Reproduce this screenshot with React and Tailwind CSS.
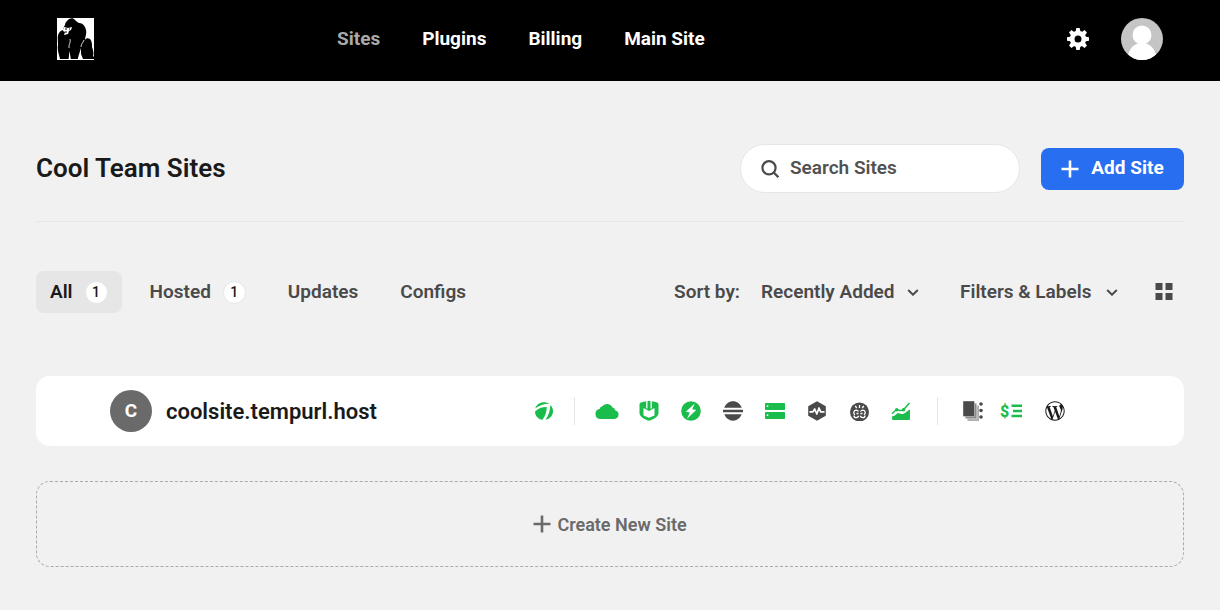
import React from 'react';
import { FaWordpressSimple } from 'react-icons/fa';

const NAV_LINKS = ['Sites', 'Plugins', 'Billing', 'Main Site'];

const TABS = [
  { label: 'All', count: 1 },
  { label: 'Hosted', count: 1 },
  { label: 'Updates' },
  { label: 'Configs' },
];

function GorillaLogo() {
  return (
    <svg width="37" height="42" viewBox="0 0 37 42" aria-hidden="true">
      <path d="M0 0h37v42H0z" fill="#fff" />
      <path
        d="M8 7C8 5 9 4 10 3c2-3 6-4 8-1 1 1 2 2 4 3 4 0 6 3 7 7 1 4-1 7-1 10 1-2 3-2 5-1 2 2 2 5 2 8 1 3 2 6 1 9l1 1v2H3c-1-5-3-9-2-14 0-5-1-9 1-12 1-2 3-3 5-3-1-2 0-3 1-5z"
        fill="#000"
      />
      <path d="M7 9l4 1 4-1-1 3-2 1-1 3-4 1 1-3-2-1z" fill="#fff" />
      <path d="M8 11h2M12 11h1M8 14h2" stroke="#000" strokeWidth="1" />
      <path d="M13 21c1 3-1 5-1 7v2M27 22c-1 3-3 4-3 7" fill="none" stroke="#fff" strokeWidth=".8" />
      <path d="M11.500 42l1-9 1.500 9zM20.500 42l1-4 2.500-8v6l2 5z" fill="#fff" />
    </svg>
  );
}

function GearIcon() {
  return (
    <svg width="22" height="22" viewBox="0 0 22 22" fill="#fff" aria-hidden="true">
      <path
        fillRule="evenodd"
        d="M11 2.800a8.200 8.200 0 1 0 0 16.400a8.200 8.200 0 1 0 0-16.400zM11 7.500a3.500 3.500 0 1 1 0 7a3.500 3.500 0 1 1 0-7z"
      />
      {[0, 45, 90, 135, 180, 225, 270, 315].map((angle) => (
        <path key={angle} d="M9.300 0h3.400l.8 4.500H8.500z" transform={`rotate(${angle} 11 11)`} />
      ))}
    </svg>
  );
}

function UserAvatar() {
  return (
    <svg width="42" height="42" viewBox="0 0 42 42" className="rounded-full" aria-hidden="true">
      <path d="M0 0h42v42H0z" fill="#c5c5c5" />
      <path d="M6 42c1-10 6-17 15-17s14 7 15 17z" fill="#fff" />
      <circle cx="21" cy="17" r="9.500" fill="#fff" />
    </svg>
  );
}

function PlusIcon() {
  return (
    <svg width="18" height="18" viewBox="0 0 18 18" fill="none" stroke="currentColor" strokeWidth="2.600" aria-hidden="true">
      <path d="M9 .5v17M.5 9h17" />
    </svg>
  );
}

function ChevronIcon() {
  return (
    <svg width="12" height="8" viewBox="0 0 12 8" fill="none" stroke="currentColor" strokeWidth="2" aria-hidden="true">
      <path d="M1.200 2L6 6.700 10.800 2" />
    </svg>
  );
}

function SearchIcon() {
  return (
    <svg width="18" height="18" viewBox="0 0 18 18" fill="none" stroke="#4a4a4a" strokeWidth="2.200" className="shrink-0" aria-hidden="true">
      <circle cx="8" cy="7.800" r="6.600" />
      <path d="M12.500 12.300l4.800 4.800" />
    </svg>
  );
}

function HubIcon() {
  return (
    <svg width="20" height="20" viewBox="0 0 20 20" fill="#1abc4c" aria-hidden="true">
      <path d="M1.200 7.500C2.300 3.500 6 1.200 10 1.200c2 0 3.600.5 5 1.500C10 2.700 5 4.500 1.200 7.500z" />
      <path d="M1 10.500c3.500-3.300 7.500-4.600 11.700-4.400C13 10 11.500 14.500 8.500 18.800 4 18.300 1 14.800 1 10.500z" />
      <path d="M16.300 4c1.700 1.500 2.700 3.700 2.700 6 0 4.500-3 8-7.500 8.800 3.200-4.500 4.900-9.800 4.800-14.800z" />
    </svg>
  );
}

function CloudIcon() {
  return (
    <svg width="24" height="16" viewBox="0 0 24 16" fill="#1abc4c" aria-hidden="true">
      <path d="M5.500 16a5 5 0 0 1-1-9.900A4 4 0 0 1 7.300 3.200 6 6 0 0 1 17.500 4.600a3.600 3.600 0 0 1 2.900 2.800A4.400 4.400 0 0 1 19.500 16z" />
    </svg>
  );
}

function DefenderIcon() {
  return (
    <svg width="20" height="20" viewBox="0 0 20 20" aria-hidden="true">
      <path d="M2 1.500C4 .7 7 .3 10 .3s6 .4 8 1.200c1 .3 1.500 1 1.500 2V12c0 3.500-5 6.500-9.500 7.700C5.500 18.500.5 15.500.5 12V3.500c0-1 .5-1.700 1.500-2z" fill="#1abc4c" />
      <path d="M4.500 7L10 10l5.500-3v7.500L10 16.800l-5.500-2.300z" fill="#fff" />
      <path d="M7.200 0h1.500v7.500H7.200zM11.300 0h1.500v7.500h-1.500z" fill="#fff" />
      <path d="M8.700 0h2.600v7.800L10 8.500l-1.300-.7z" fill="#1abc4c" />
    </svg>
  );
}

function BoltIcon() {
  return (
    <svg width="20" height="20" viewBox="0 0 20 20" aria-hidden="true">
      <circle cx="10" cy="10" r="9.800" fill="#1abc4c" />
      <path d="M13.800 2.500L4.800 10.800l4 .7L6 17.800l9.200-8.700-4-.9z" fill="#fff" />
    </svg>
  );
}

function StripesIcon() {
  return (
    <svg width="20" height="20" viewBox="0 0 20 20" fill="#4a4a4a" aria-hidden="true">
      <path d="M1.300 6.700C2.700 3 6 .3 10 .3s7.300 2.700 8.700 6.400zM0 8.800h20v2.400H0zM1.300 13.300C2.700 17 6 19.700 10 19.700s7.300-2.700 8.700-6.400z" />
    </svg>
  );
}

function ServerIcon() {
  return (
    <svg width="20" height="20" viewBox="0 0 20 20" aria-hidden="true">
      <rect y="2" width="20" height="7" rx=".8" fill="#1abc4c" />
      <rect y="11" width="20" height="7" rx=".8" fill="#1abc4c" />
      <circle cx="2.500" cy="5.200" r=".9" fill="#fff" />
      <circle cx="2.500" cy="14.200" r=".9" fill="#fff" />
    </svg>
  );
}

function UptimeIcon() {
  return (
    <svg width="20" height="20" viewBox="0 0 20 20" aria-hidden="true">
      <path d="M10 .3l8.800 5v9.400l-8.800 5-8.800-5V5.300z" fill="#4a4a4a" />
      <path d="M2.500 10.800H6L7.700 8l2.100 5 2.200-6 1.700 3.800h3.800" fill="none" stroke="#fff" strokeWidth="1.700" strokeLinejoin="round" />
    </svg>
  );
}

function BrokenLinkIcon() {
  return (
    <svg width="20" height="20" viewBox="0 0 20 20" fill="none" stroke="#fff" strokeWidth="1.300" aria-hidden="true">
      <circle cx="10.500" cy="11" r="9.500" fill="#4a4a4a" stroke="none" />
      <path d="M10.500 4v3M6.300 4.800l1.400 2.400M14.700 4.800l-1.400 2.400" />
      <path d="M9.500 10.500c-.5-1-1.300-1.300-2.500-1.300a2.400 2.400 0 0 0-1 4.500M11.500 10.500c.5-1 1.300-1.300 2.500-1.300a2.400 2.400 0 0 1 1 4.500" />
      <path d="M7.500 12.500h2M11.500 12.500h2" />
      <path d="M9.500 14.800c0 1.200-1 1.800-2.200 1.800-1.500 0-2.300-1-2.300-2.200M11.500 14.800c0 1.200 1 1.800 2.200 1.800 1.500 0 2.300-1 2.300-2.200" />
    </svg>
  );
}

function AnalyticsIcon() {
  return (
    <svg width="20" height="20" viewBox="0 0 20 20" fill="#1abc4c" aria-hidden="true">
      <path d="M1 15.500c2.500-.5 4-1.500 5.500-3.500 2 .5 4 1.300 6 .7 2-.7 4-3 6.500-4.200V18a1 1 0 0 1-1 1H2a1 1 0 0 1-1-1z" />
      <path d="M1 12.800L5.500 8.500l3 1 3.500-.2 6.500-7.300" fill="none" stroke="#1abc4c" strokeWidth="1.500" />
      <circle cx="5.700" cy="8.700" r="1.700" />
      <circle cx="12.500" cy="8.700" r="1.700" />
    </svg>
  );
}

function PagesIcon() {
  return (
    <svg width="20" height="20" viewBox="0 0 20 20" aria-hidden="true">
      <path d="M4.500 4.500H16V20H4.500z" fill="#b0b0b0" />
      <path d="M2.200 2.200h11.500v15.500H2.200z" fill="#8a8a8a" stroke="#fff" strokeWidth=".4" />
      <path d="M0 0h11.500v15.500H0z" fill="#4a4a4a" stroke="#fff" strokeWidth=".4" />
      <circle cx="18" cy="3" r="1.800" fill="#4a4a4a" />
      <circle cx="18" cy="9.500" r="1.800" fill="#4a4a4a" />
      <circle cx="18" cy="16" r="1.800" fill="#4a4a4a" />
    </svg>
  );
}

function BillingIcon() {
  return (
    <svg width="28" height="20" viewBox="0 0 28 20" fill="#1abc4c" aria-hidden="true">
      <text x="0" y="15.500" fontFamily="Roboto, sans-serif" fontWeight="800" fontSize="16">$</text>
      <path d="M11.500 3.500h10.500v2.500H11.500zM13 8.700h9v2.500h-9zM11.500 13.800h10.500v2.500H11.500z" />
    </svg>
  );
}

const SERVICES = [
  { name: 'Hosting', Icon: CloudIcon },
  { name: 'Security', Icon: DefenderIcon },
  { name: 'Performance', Icon: BoltIcon },
  { name: 'SEO', Icon: StripesIcon },
  { name: 'Backups', Icon: ServerIcon },
  { name: 'Uptime', Icon: UptimeIcon },
  { name: 'Broken Links', Icon: BrokenLinkIcon },
  { name: 'Analytics', Icon: AnalyticsIcon },
];

function Header() {
  return (
    <header className="flex h-[81px] items-center bg-black px-[57px] pb-[3px]">
      <a href="#home" aria-label="Home">
        <GorillaLogo />
      </a>
      <nav className="ml-[243px] flex gap-[42px] text-[19px] font-bold text-white">
        {NAV_LINKS.map((link) => (
          <a key={link} href="#nav" className={link === 'Sites' ? 'text-[#aaa]' : 'text-white'}>
            {link}
          </a>
        ))}
      </nav>
      <div className="ml-auto flex items-center gap-8">
        <button type="button" aria-label="Settings">
          <GearIcon />
        </button>
        <button type="button" aria-label="Account">
          <UserAvatar />
        </button>
      </div>
    </header>
  );
}

function TitleBar() {
  return (
    <div className="flex items-center border-b border-[#e6e6e6] pb-7">
      <h1 className="text-[26px] font-semibold text-[#1a1a1a]">Cool Team Sites</h1>
      <label className="ml-auto flex h-[49px] w-[280px] items-center gap-[11px] rounded-full border border-[#e6e6e6] bg-white px-5">
        <SearchIcon />
        <input
          type="text"
          aria-label="Search Sites"
          placeholder="Search Sites"
          className="w-full min-w-0 bg-transparent text-[19px] font-semibold outline-none placeholder:text-[#525252]"
        />
      </label>
      <button type="button" className="ml-[21px] flex h-[42px] w-[143px] items-center justify-center gap-3 rounded-lg bg-[#286ef1] text-[19px] font-bold text-white">
        <PlusIcon />
        Add Site
      </button>
    </div>
  );
}

function FilterBar() {
  return (
    <div className="mt-[49px] flex items-center justify-between text-[19px] font-semibold text-[#4a4a4a]">
      <div className="flex">
        {TABS.map((tab) => (
          <button
            key={tab.label}
            type="button"
            className={`mr-[14px] flex h-[42px] items-center gap-3 rounded-lg px-[14px] ${tab.label === 'All' ? 'bg-[#e6e6e6] text-[#1a1a1a]' : ''}`}
          >
            {tab.label}
            {tab.count && (
              <span className="flex h-[23px] w-[23px] items-center justify-center rounded-full border border-[#e6e6e6] bg-white text-sm font-medium text-[#1a1a1a]">
                {tab.count}
              </span>
            )}
          </button>
        ))}
      </div>
      <div className="flex items-center">
        <label htmlFor="sort" className="mr-[21px]">Sort by:</label>
        <div className="grid items-center">
          <select id="sort" className="col-start-1 row-start-1 w-[158px] appearance-none bg-transparent">
            <option>Recently Added</option>
          </select>
          <span className="pointer-events-none col-start-1 row-start-1 justify-self-end">
            <ChevronIcon />
          </span>
        </div>
        <button type="button" className="ml-[41px] flex w-[158px] items-center justify-between">
          Filters &amp; Labels
          <ChevronIcon />
        </button>
        <button type="button" aria-label="Grid view" className="mr-[11px] ml-[37px]">
          <svg width="18" height="18" viewBox="0 0 18 18" fill="#4a4a4a" aria-hidden="true">
            <path d="M.5 0h7v7h-7zM10.500 0h7v7h-7zM.5 10h7v7h-7zM10.500 10h7v7h-7z" />
          </svg>
        </button>
      </div>
    </div>
  );
}

function SiteRow() {
  return (
    <div className="mt-[63px] flex h-[70px] items-center rounded-[14px] bg-white pr-[119px] pl-[74px]">
      <span className="flex h-[42px] w-[42px] items-center justify-center rounded-full bg-[#6a6a6a] text-[19px] font-bold text-white">
        C
      </span>
      <a href="#site" className="ml-[14px] text-[22px] font-semibold text-[#1a1a1a]">
        coolsite.tempurl.host
      </a>
      <div className="ml-auto flex items-center">
        <button type="button" aria-label="Hub" className="mr-5">
          <HubIcon />
        </button>
        <div className="flex items-center border-x border-[#e6e6e6] pr-[15px] pl-[11px]">
          {SERVICES.map(({ name, Icon }) => (
            <button key={name} type="button" aria-label={name} className="flex h-7 w-[42px] items-center justify-center">
              <Icon />
            </button>
          ))}
        </div>
        <div className="ml-[25px] flex items-center gap-[17px]">
          <button type="button" aria-label="Site pages">
            <PagesIcon />
          </button>
          <button type="button" aria-label="Client billing">
            <BillingIcon />
          </button>
          <a href="#wp-admin" aria-label="WordPress admin">
            <FaWordpressSimple className="h-5 w-5 text-[#1a1a1a]" />
          </a>
        </div>
      </div>
    </div>
  );
}

export default function App() {
  return (
    <div className="min-h-screen bg-[#f1f1f1] font-['Roboto',sans-serif]">
      <Header />
      <main className="px-9 pt-[63px] pb-11">
        <TitleBar />
        <FilterBar />
        <SiteRow />
        <button
          type="button"
          className="mt-[35px] flex h-[86px] w-full items-center justify-center gap-[6px] rounded-[14px] border border-dashed border-[#aaa] text-[18px] font-semibold text-[#6a6a6a]"
        >
          <PlusIcon />
          Create New Site
        </button>
      </main>
    </div>
  );
}
